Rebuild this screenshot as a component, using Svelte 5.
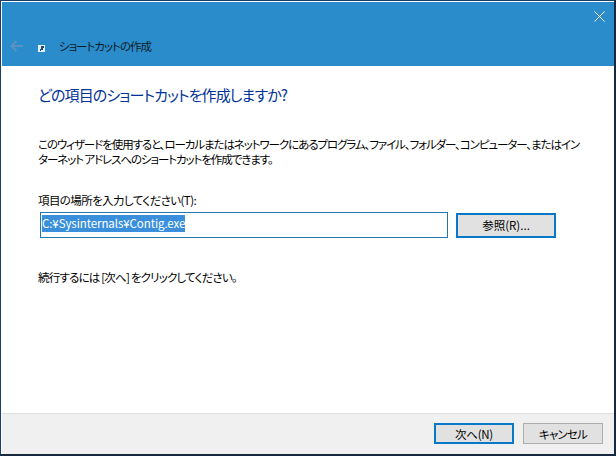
<script>
  let location = 'C:¥Sysinternals¥Contig.exe';
</script>

<div class="window">
  <header class="titlebar">
    <button class="close" aria-label="閉じる">
      <svg width="11" height="11" viewBox="0 0 11 11"><path d="M0.5 0.5 L10.5 10.5 M10.5 0.5 L0.5 10.5" stroke="#fff" stroke-width="1" fill="none" /></svg>
    </button>
    <div class="nav">
      <svg class="back" width="13" height="12" viewBox="0 0 13 12"><path d="M6.5 1 L1.5 6 L6.5 11 M1.5 6 H13" stroke="#5a93bd" stroke-width="2" fill="none" /></svg>
      <svg class="icon" width="7" height="7" viewBox="0 0 7 7"><rect width="7" height="7" fill="#e6eef6" /><path d="M3 1 H6 V3 H5 V5 H3 V6 H2 V4 H3 Z" fill="#1b4a8a" /></svg>
      <span class="title">ショートカットの作成</span>
    </div>
  </header>

  <main class="content">
    <h1>どの項目のショートカットを作成しますか?</h1>
    <p class="desc">このウィザードを使用すると、ローカルまたはネットワークにあるプログラム、ファイル、フォルダー、コンピューター、またはイン<br />ターネット アドレスへのショートカットを作成できます。</p>
    <label for="loc">項目の場所を入力してください(T):</label>
    <div class="row">
      <div class="input" id="loc"><span class="selected">{location}</span></div>
      <button class="btn browse">参照(R)...</button>
    </div>
    <p class="hint">続行するには [次へ] をクリックしてください。</p>
  </main>

  <footer class="footer">
    <button class="btn primary">次へ(N)</button>
    <button class="btn cancel">キャンセル</button>
  </footer>
</div>

<style>
  :global(body) {
    margin: 0;
    background: #fff;
  }
  .window {
    width: 616px;
    height: 456px;
    box-sizing: border-box;
    border: 2px solid #1c3f66;
    border-top-width: 1px;
    border-left-width: 1px;
    border-right-color: #16293f;
    border-bottom-color: #16293f;
    display: flex;
    flex-direction: column;
    font-family: "Noto Sans CJK JP", "Liberation Sans", sans-serif;
    font-feature-settings: "palt";
    font-size: 11.5px;
    color: #000;
  }
  .titlebar {
    height: 64px;
    margin: 1px 0 0 1px;
    background: #2a8ccb;
    display: flex;
    flex-direction: column;
    flex-shrink: 0;
  }
  .close {
    align-self: flex-end;
    margin: 9px 9px 0 0;
    padding: 0;
    border: 0;
    background: none;
    width: 11px;
    height: 11px;
    display: flex;
  }
  .nav {
    display: flex;
    align-items: center;
    margin-top: 16px;
    padding-left: 8px;
  }
  .back {
    flex-shrink: 0;
  }
  .icon {
    margin: 4px 0 0 15px;
  }
  .title {
    margin-left: 14px;
    letter-spacing: -1px;
    color: #0f1d27;
  }
  .content {
    flex: 1;
    padding: 0 0 0 36px;
    margin-left: 1px;
    background: #fff;
    min-width: 0;
  }
  h1 {
    margin: 18px 0 0;
    font-size: 15px;
    font-weight: 400;
    line-height: 22px;
    letter-spacing: -0.9px;
    color: #003399;
  }
  .desc {
    margin: 31px 0 0;
    white-space: nowrap;
    line-height: 15px;
    letter-spacing: -1.08px;
  }
  label {
    display: block;
    margin-top: 26px;
    line-height: 15px;
    letter-spacing: -0.6px;
  }
  .row {
    display: flex;
    gap: 8px;
    margin-top: 4px;
    align-items: center;
  }
  .input {
    width: 408px;
    height: 26px;
    margin-left: 2px;
    box-sizing: border-box;
    border: 1px solid #2178b0;
    padding: 2px 0 0 1px;
    line-height: 17px;
  }
  .selected {
    display: inline-block;
    background: #3a8fdc;
    color: #fff;
    height: 17px;
    letter-spacing: -0.08px;
  }
  .btn {
    width: 80px;
    height: 21px;
    box-sizing: border-box;
    background: #e1e1e1;
    border: 1px solid #adadad;
    font: inherit;
    color: #000;
    padding: 0;
    letter-spacing: -0.3px;
  }
  .browse {
    width: 100px;
    height: 25px;
    border: 2px solid #0a78c8;
    letter-spacing: 0;
  }
  .primary {
    border: 2px solid #0a78c8;
  }
  .cancel {
    letter-spacing: -0.8px;
  }
  .hint {
    margin: 32px 0 0;
    line-height: 15px;
    letter-spacing: -0.8px;
  }
  .footer {
    height: 41px;
    margin-left: 1px;
    box-sizing: border-box;
    border-top: 1px solid #dfdfdf;
    background: #f0f0f0;
    display: flex;
    justify-content: flex-end;
    gap: 9px;
    padding: 9px 11px 0 0;
    flex-shrink: 0;
  }
</style>
